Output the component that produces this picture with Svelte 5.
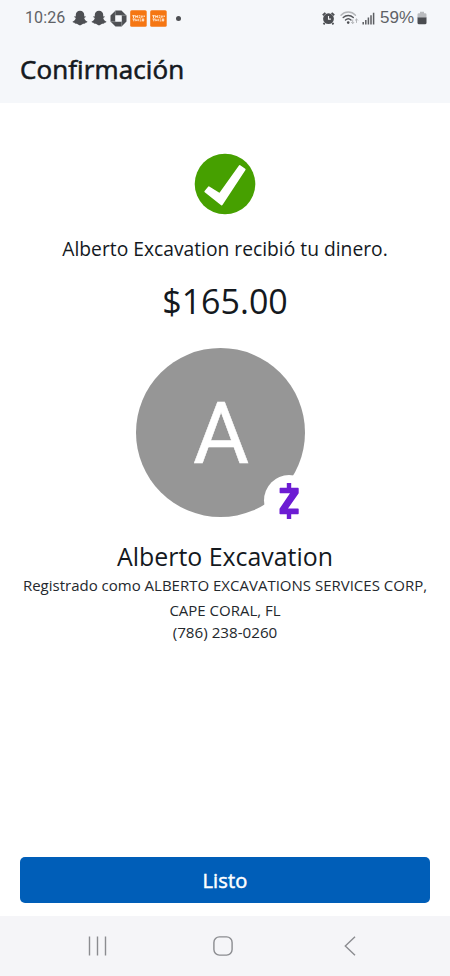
<script>
  const notices = ['snap', 'snap', 'bank', 'store', 'store'];
  const recipient = {
    name: 'Alberto Excavation',
    initial: 'A',
    registered: ['Registrado como ALBERTO EXCAVATIONS SERVICES CORP,', 'CAPE CORAL, FL'],
    phone: '(786) 238-0260'
  };
  const amount = '$165.00';
</script>

<div class="screen">
  <header>
    <div class="status">
      <span class="time">10:26</span>
      <div class="notices">
        {#each notices as kind}
          {#if kind === 'snap'}
            <svg width="16" height="16" viewBox="0 0 16 16">
              <path fill="#4d4f53" d="M8 .8C5.400.8 3.800 2.500 3.800 4.800v1.700l-1-.2c-.7.1-.7.7-.2 1l1.200.7C3.300 9.800 2.200 10.900.8 11.400c-.4.3-.1.8.5 1l1.200.3.4.9c.8.2 1.700-.1 2.500.3.8.5 1.500 1.300 2.600 1.300s1.800-.8 2.600-1.300c.8-.4 1.700-.1 2.500-.3l.4-.9 1.200-.3c.6-.2.9-.7.5-1-1.400-.5-2.500-1.600-3-3.400l1.200-.7c.5-.3.5-.9-.2-1l-1 .2V4.800C12.200 2.500 10.600.8 8 .8z" />
            </svg>
          {:else if kind === 'bank'}
            <svg width="17" height="17" viewBox="0 0 17 17">
              <path fill="#4d4f53" fill-rule="evenodd" d="M5.600.5h5.900l5 5v6l-5 5h-6l-5-5v-6zM5.200 5.200v6.600h6.600V5.200z" />
              <path d="M5.300.7v4.800M16.300 5.300h-4.800M11.700 16.300v-4.800M.7 11.700h4.800" stroke="#a5a7aa" stroke-width=".6" />
            </svg>
          {:else}
            <svg width="17" height="17" viewBox="0 0 17 17">
              <rect x=".2" y=".3" width="16.500" height="16.400" rx="1.500" fill="#f57612" />
              <path d="M2.200 5.800h3M3.500 5.300v2.700M5.700 5.300v2.500M7.400 5.300v2.500M5.700 6.600h1.700M8.600 5.800h1.700M8.600 7.300h1.700M11.300 7.800V5.500M12.800 5.500v2M14.300 5.500v1.500M2.500 9h3M3.800 9v2.300M5.800 9.200v2M6 10.200h1.500M8.200 8.800v2.400M9.700 9h1.500M9.700 10.900h1.700M12.400 8.500v2.500h1.300V8.500" fill="none" stroke="#ffe9d4" stroke-width="1" />
            </svg>
          {/if}
        {/each}
      </div>
      <i class="dot"></i>
      <div class="system">
        <svg class="alarm" width="13" height="13" viewBox="0 0 13 13">
          <path d="M.8 3.200L3.400.9M12.200 3.200L9.600.9M2.700 11l-1.200 1.300M10.300 11l1.200 1.300" stroke="#4d4f53" stroke-width="1.900" />
          <circle cx="6.500" cy="6.700" r="5.400" fill="#4d4f53" />
          <path d="M6.500 4v3.100h2.400" fill="none" stroke="#f5f6f8" stroke-width="1.100" />
        </svg>
        <svg class="wifi" width="19" height="14" viewBox="0 0 19 14">
          <g fill="none" stroke-linecap="round">
            <path d="M1 4.200C5-.1 11.500-.1 15.500 4.200" stroke="#b4b6b9" stroke-width="1.400" />
            <path d="M3.200 6.600c2.900-2.900 7.200-2.900 10.100 0" stroke="#55575b" stroke-width="1.400" />
            <path d="M5.500 9c1.700-1.600 3.900-1.600 5.500 0" stroke="#55575b" stroke-width="1.400" />
            <path d="M12.700 9v3.500m-1.200-1.200l1.200 1.200 1.200-1.200M16.500 11.500V8m-1.200 1.200L16.500 8l1.200 1.200" stroke="#b4b6b9" stroke-width="1" />
          </g>
          <circle cx="8.200" cy="11.600" r="1.300" fill="#4d4f53" />
        </svg>
        <svg class="signal" width="13" height="13" viewBox="0 0 13 13">
          <path d="M1.200 12.500V10M3.800 12.500V8M6.400 12.500V5.500M9 12.500V3.200M11.600 12.500V.8" stroke="#5c5e62" stroke-width="1.500" />
        </svg>
        <span class="percent">59%</span>
        <svg width="10" height="14" viewBox="0 0 10 14">
          <path d="M3 .7h4v1.500h1.200q1.300 0 1.300 1.300V7h-9V3.500q0-1.300 1.300-1.300H3z" fill="#b9bbbe" />
          <path d="M.5 6.500h9v5.300q0 1.500-1.500 1.500H2Q.5 13.300.5 11.800z" fill="#4a4c50" />
        </svg>
      </div>
    </div>
    <h1>Confirmación</h1>
  </header>

  <main>
    <svg class="success" width="62" height="62" viewBox="0 0 62 62">
      <circle cx="31" cy="31" r="30.300" fill="#46a000" />
      <path d="M11.300 38.500L14.800 34.200 25.700 41 45.700 13 50.700 16.500 27.700 51.500z" fill="#fff" stroke="#fff" stroke-width="1.800" stroke-linejoin="round" />
    </svg>
    <p class="message">{recipient.name} recibió tu dinero.</p>
    <p class="amount">{amount}</p>
    <div class="avatar">
      <span>{recipient.initial}</span>
      <div class="badge">
        <svg width="20" height="36" viewBox="0 0 20 36">
          <path d="M7.800 0h4.400v4.800H19q.7 0 .7.700v4.700L9 25.500h10q.7 0 .7.700v4.300q0 .7-.7.700h-6.800V36H7.800v-4.800H1.200q-.7 0-.7-.7v-4.800L11 10.300H1.300q-.7 0-.7-.7V5.500q0-.7.700-.7h6.500z" fill="#6c1cd3" />
        </svg>
      </div>
    </div>
    <h2>{recipient.name}</h2>
    <div class="details">
      {#each recipient.registered as line}
        <p>{line}</p>
      {/each}
      <p class="phone">{recipient.phone}</p>
    </div>
  </main>

  <div class="action"><button>Listo</button></div>

  <nav>
    <svg width="20" height="20" viewBox="0 0 20 20"><path d="M1.500.5v19M9.500.5v19M17.500.5v19" stroke="#8b8c90" stroke-width="1.400" /></svg>
    <svg class="home" width="20" height="20" viewBox="0 0 20 20"><rect x=".9" y=".9" width="18.200" height="18.200" rx="5.500" fill="none" stroke="#8b8c90" stroke-width="1.400" /></svg>
    <svg width="12" height="20" viewBox="0 0 12 20"><path d="M11 .7L1.300 10 11 19.300" fill="none" stroke="#8b8c90" stroke-width="1.400" /></svg>
  </nav>
</div>

<style>
  :global(body) { background: #fff; }
  .screen {
    width: 450px;
    height: 976px;
    display: flex;
    flex-direction: column;
    overflow: hidden;
    background: #fff;
    color: #14191e;
    font-family: "Open Sans", "Noto Sans", sans-serif;
  }
  svg { display: block; flex: none; }
  p, h1, h2 { margin: 0; font-weight: 400; white-space: nowrap; }
  header { height: 103px; background: #f5f7fa; flex: none; }
  .status {
    height: 36px;
    display: flex;
    align-items: center;
    padding: 0 23px 0 25px;
    box-sizing: border-box;
    color: #606266;
    font: 16px/36px Roboto, sans-serif;
  }
  .time { width: 47px; letter-spacing: .1px; }
  .notices { display: flex; align-items: center; gap: 3px; }
  .dot { width: 5px; height: 5px; border-radius: 50%; background: #4d4f53; margin-left: 9px; }
  .system { margin-left: auto; display: flex; align-items: center; }
  .wifi { margin-left: 5px; }
  .signal { margin-left: 3px; }
  .percent { width: 35px; margin: 0 2px 0 5px; font: 17px/36px "Liberation Sans", sans-serif; }
  h1 {
    padding: 14px 0 0 20px;
    font-size: 26px;
    line-height: 38px;
    letter-spacing: .1px;
    -webkit-text-stroke: .6px currentColor;
  }
  main { flex: 1; display: flex; flex-direction: column; align-items: center; }
  .success { margin-top: 50px; }
  .message { margin-top: 20px; font-size: 19.250px; line-height: 28px; }
  .amount { margin-top: 14px; font-size: 34px; line-height: 48px; }
  .avatar {
    position: relative;
    width: 169px;
    height: 169px;
    margin: 23px 9px 0 0;
    border-radius: 50%;
    background: #969696;
    color: #fff;
    text-align: center;
    font: 86px/172px Roboto, sans-serif;
    text-indent: 1px;
    -webkit-text-stroke: .5px currentColor;
  }
  .badge {
    position: absolute;
    left: 128px;
    top: 127px;
    width: 50px;
    height: 51px;
    border-radius: 50%;
    background: #fff;
    display: flex;
    align-items: center;
    justify-content: center;
  }
  h2 { margin-top: 21px; font-size: 24.900px; line-height: 36px; }
  .details { margin-top: -1px; text-align: center; font-size: 15px; line-height: 25px; color: #24282d; }
  .phone { line-height: 19px; font-size: 15.200px; }
  .action { padding: 0 20px 13px; flex: none; }
  button {
    display: block;
    width: 100%;
    height: 46px;
    padding: 0;
    border: 0;
    border-radius: 5px;
    background: #005eb8;
    color: #fff;
    font: 400 20px/48px "Open Sans", sans-serif;
    letter-spacing: .2px;
    -webkit-text-stroke: .5px currentColor;
  }
  nav {
    height: 60px;
    box-sizing: border-box;
    padding: 0 94px 0 88px;
    display: flex;
    align-items: center;
    justify-content: space-between;
    background: #f5f5f8;
    flex: none;
  }
  .home { margin-right: 6px; }
</style>
